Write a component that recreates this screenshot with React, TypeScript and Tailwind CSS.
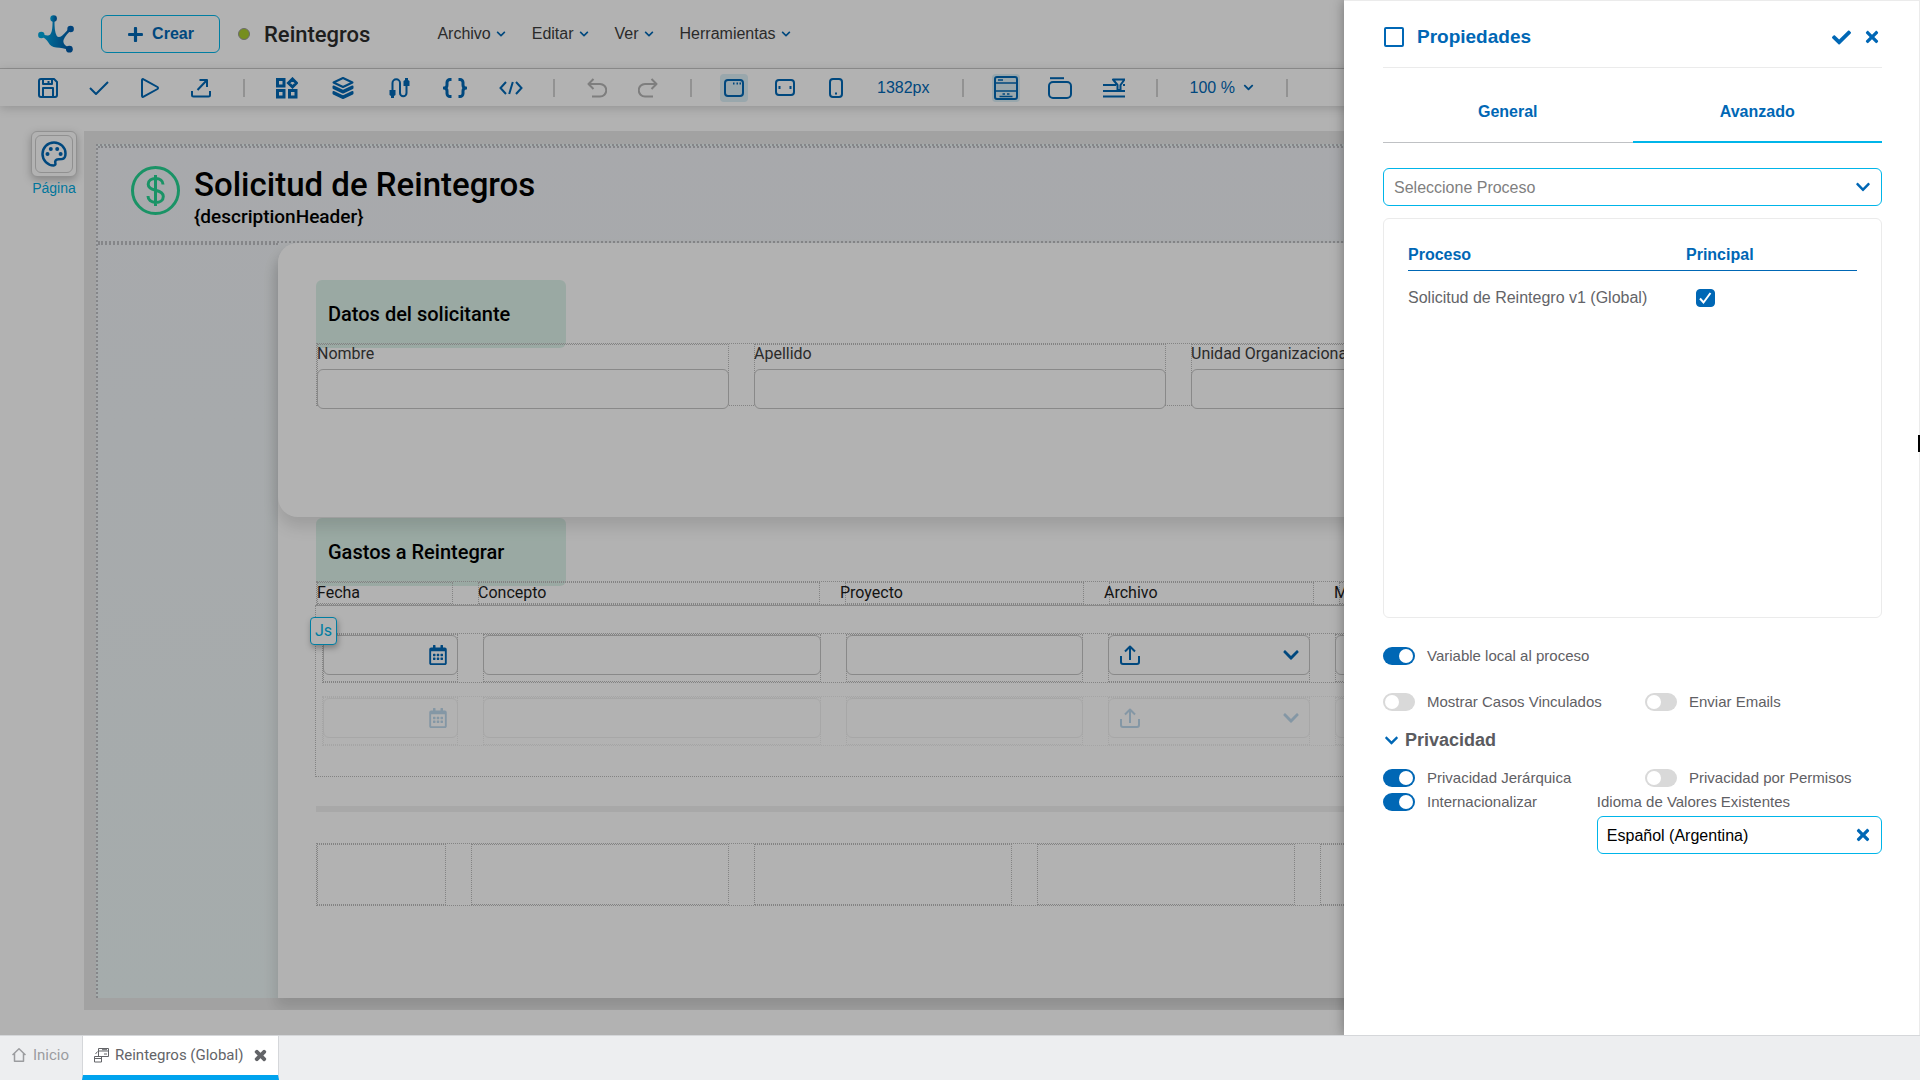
import { useState } from "react";
import type { ReactNode } from "react";
import clsx from "clsx";
import {
    FaCheck,
    FaChevronDown,
    FaPlus,
    FaRegCalendarAlt,
    FaTimes,
} from "react-icons/fa";

const menus = ["Archivo", "Editar", "Ver", "Herramientas"];

const headerCells = [
    { name: "Fecha", width: "w-[136px]", shift: "-ml-px" },
    { name: "Concepto", width: "w-[342px]", shift: "-ml-px" },
    { name: "Proyecto", width: "w-[239px]", shift: "-ml-[6px]" },
    { name: "Archivo", width: "w-[205px]", shift: "-ml-[6px]" },
    { name: "Monto", width: "w-[264px]", shift: "-ml-[6px]" },
];

const personFields = ["Nombre", "Apellido", "Unidad Organizacional"];

const Icon = ({ w, h, sw = 2, children }: { w: number; h: number; sw?: number; children: ReactNode }) => (
    <svg
        width={w}
        height={h}
        viewBox={`0 0 ${w} ${h}`}
        fill="none"
        stroke="currentColor"
        strokeWidth={sw}
        strokeLinejoin="round"
        className="shrink-0"
        aria-hidden="true"
    >
        {children}
    </svg>
);

const Logo = () => (
    <svg width="36" height="38" viewBox="0 0 36 38" aria-hidden="true">
        <defs>
            <linearGradient id="logo" x1="0" y1="0.5" x2="1" y2="0.6">
                <stop offset="0" stopColor="#00aee6" />
                <stop offset="0.6" stopColor="#0078bf" />
                <stop offset="1" stopColor="#0059a5" />
            </linearGradient>
        </defs>
        <g fill="url(#logo)">
            <path d="M14.6 5h1.900c-.1 7 .3 12.500 2.300 16 1 1.600 3.200 1.400 5.200-.2 3-2.400 5.300-5.200 7.300-8.200l2.200 1.600c-3 3.800-6.700 6.800-8 10.800-.8 3.200 1.500 6 6.500 7.800l-1 2.400c-4.400-2.200-8-2.600-12.700-2.800-3.800-.2-6.400-2.200-7.900-5C8.800 24.700 6 22.400 2.600 21l.9-2c3.500 1.400 6.900 2.200 8.700.4C14.500 17 14.500 11 14.600 5z" />
            <circle cx="15.600" cy="3.600" r="3.300" />
        </g>
        <circle cx="3.300" cy="20" r="3.200" fill="#00a8df" />
        <circle cx="32.600" cy="14" r="3.300" fill="#0061b0" />
        <circle cx="31.400" cy="34.200" r="3.400" fill="#005ba8" />
    </svg>
);

const ToolButton = ({ label, active, muted, children }: { label: string; active?: boolean; muted?: boolean; children: ReactNode }) => (
    <button
        aria-label={label}
        className={clsx(
            "flex h-7 w-7 shrink-0 items-center justify-center rounded",
            active && "bg-[#dbeff7]",
            muted ? "text-[#b5b5b5]" : "text-[#0067b5]"
        )}
    >
        {children}
    </button>
);

const Separator = () => <span className="mx-7 h-[18px] w-[2px] shrink-0 bg-[#d2d2d2]" />;

const Header = () => (
    <header className="flex h-[69px] items-center border-b border-[#cfcfcf] bg-white pl-[38px]">
        <Logo />
        <button className="ml-[27px] flex h-[38px] w-[119px] items-center justify-center gap-2 rounded-md border border-[#00b5e9] text-base font-bold text-[#0067b5]">
            <FaPlus size={17} />
            Crear
        </button>
        <span className="ml-[18px] h-3 w-3 rounded-full border border-[#9a9a9a] bg-[#a9cc2c]" />
        <h1 className="ml-[14px] font-['Roboto'] text-[22px] font-medium text-[#2b2b2b]">Reintegros</h1>
        <nav className="ml-[67px] flex gap-[26px]">
            {menus.map((name) => (
                <button key={name} className="flex items-center gap-[5px] text-base text-[#3d3d3d]">
                    {name}
                    <FaChevronDown size={10} className="text-[#0067b5]" />
                </button>
            ))}
        </nav>
    </header>
);

const Toolbar = () => (
    <div className="relative flex h-[37px] items-center bg-white pl-[34px] shadow-[0_2px_10px_rgba(0,0,0,0.18)]">
        <div className="flex gap-[23px]">
            <ToolButton label="Guardar">
                <Icon w={20} h={20}>
                    <path d="M1 3a2 2 0 0 1 2-2h13l3 3v13a2 2 0 0 1-2 2H3a2 2 0 0 1-2-2zM5 19v-9h10v9M5 1v5h9V1M10.500 3v2" />
                </Icon>
            </ToolButton>
            <ToolButton label="Validar">
                <Icon w={20} h={16}>
                    <path d="M1 8l6 6L19 2" />
                </Icon>
            </ToolButton>
            <ToolButton label="Ejecutar">
                <Icon w={18} h={20}>
                    <path d="M1 2.200v15.600c0 1 .8 1.400 1.600.9L16.500 11c.7-.5.7-1.500 0-2L2.600 1.300C1.800.8 1 1.200 1 2.200z" />
                </Icon>
            </ToolButton>
            <ToolButton label="Publicar">
                <Icon w={20} h={20}>
                    <path d="M1 13v4a1.500 1.500 0 0 0 1.500 1.500h15A1.500 1.500 0 0 0 19 17v-4M6.500 12L16 2M8.500 2H16v7" />
                </Icon>
            </ToolButton>
        </div>
        <Separator />
        <div className="flex gap-7">
            <ToolButton label="Componentes">
                <Icon w={22} h={22} sw={3}>
                    <path strokeLinejoin="miter" d="M1.500 2.500h6.500v6.500H1.500zM1.500 13.500h6.500v6.500H1.500zM13.500 13.500h6.500v6.500h-6.500zM16.500 2l4 4-4 4-4-4z" />
                </Icon>
            </ToolButton>
            <ToolButton label="Capas">
                <Icon w={22} h={24} sw={2}>
                    <path d="M11 2l9.500 4.500L11 11 1.500 6.500zM1.500 10.500v1.500L11 16.500l9.500-4.500v-1.500L11 15zM1.500 16v1.500L11 22l9.500-4.500V16L11 20.500z" />
                </Icon>
            </ToolButton>
            <ToolButton label="Conectores">
                <Icon w={21} h={20} sw={2}>
                    <path d="M3.500 13V5a3.500 3.500 0 0 1 7.500 0v10a3.200 3.200 0 0 0 6.500 0V7" />
                    <path fill="currentColor" stroke="none" d="M.5 12h6v5l-1.500 1v2h-3v-2L.5 17zM14.500 8h6V3L19 2V0h-3v2l-1.500 1z" />
                </Icon>
            </ToolButton>
            <ToolButton label="Variables">
                <Icon w={24} h={20} sw={3}>
                    <path d="M8.500 1.500H7a3 3 0 0 0-3 3V7c0 1.500-.8 3-3 3 2.200 0 3 1.500 3 3v2.500a3 3 0 0 0 3 3h1.500M15.500 1.500H17a3 3 0 0 1 3 3V7c0 1.500.8 3 3 3-2.200 0-3 1.500-3 3v2.500a3 3 0 0 1-3 3h-1.500" />
                </Icon>
            </ToolButton>
            <ToolButton label="Código">
                <Icon w={24} h={14} sw={2}>
                    <path strokeLinejoin="miter" d="M7 1L1.500 7 7 13M17 1l5.500 6L17 13M13.800 1l-3.600 12" />
                </Icon>
            </ToolButton>
        </div>
        <Separator />
        <div className="flex gap-[23px]">
            <ToolButton label="Deshacer" muted>
                <Icon w={20} h={20}>
                    <path d="M6.500 1L1.500 6l5 5M2 6h11a6 6 0 0 1 0 12.500H5" />
                </Icon>
            </ToolButton>
            <ToolButton label="Rehacer" muted>
                <Icon w={20} h={20}>
                    <path d="M13.500 1l5 5-5 5M18 6H7a6 6 0 0 0 0 12.500h8" />
                </Icon>
            </ToolButton>
        </div>
        <Separator />
        <div className="flex items-center gap-[23px]">
            <ToolButton label="Escritorio" active>
                <Icon w={20} h={18}>
                    <rect x="1" y="1" width="18" height="16" rx="3" />
                    <path d="M9 4.500h1.500M12.500 4.500H14M15.500 4.500H17" />
                </Icon>
            </ToolButton>
            <ToolButton label="Tableta">
                <Icon w={20} h={17}>
                    <rect x="1" y="1" width="18" height="15" rx="3" />
                    <path d="M4.500 7v3M15.500 7v3" />
                </Icon>
            </ToolButton>
            <ToolButton label="Teléfono">
                <Icon w={14} h={20}>
                    <rect x="1" y="1" width="12" height="18" rx="3" />
                    <path d="M6 15.500h2" />
                </Icon>
            </ToolButton>
            <button className="px-1 text-base text-[#0067b5]">1382px</button>
        </div>
        <Separator />
        <div className="flex gap-[26px]">
            <ToolButton label="Formulario" active>
                <Icon w={24} h={24}>
                    <rect x="1" y="1" width="22" height="22" rx="2" />
                    <path d="M1 7h22M1 15h22M4 4h5M8.500 18h2.500M13 18h2.500M5.500 20.500h13" strokeWidth="1.500" />
                </Icon>
            </ToolButton>
            <ToolButton label="Contenedor">
                <Icon w={24} h={22}>
                    <rect x="1" y="5" width="22" height="16" rx="4" />
                    <path d="M2 1.200h14" />
                </Icon>
            </ToolButton>
            <ToolButton label="Estilos">
                <Icon w={22} h={20}>
                    <path d="M0 7h13M0 13h22M0 18.500h22M10 1.500h11.500L17.500 7v5h-3V7zM20 7h2" />
                </Icon>
            </ToolButton>
        </div>
        <Separator />
        <button className="flex shrink-0 items-center gap-2 px-1 text-base text-[#0067b5]">
            100 %
            <FaChevronDown size={11} />
        </button>
        <Separator />
    </div>
);

const SectionTitle = ({ children }: { children: ReactNode }) => (
    <h3 className="-mb-[5px] flex h-[68px] w-[250px] items-center rounded-md bg-[#ddf3ea] pl-3 text-xl font-medium text-black">
        {children}
    </h3>
);

const ExpenseRow = ({ faded }: { faded?: boolean }) => {
    const box = "flex h-10 items-center rounded-md border border-[#c5c5c5]";
    const cell = "shrink-0 border border-dotted border-[#bcbcbc]";
    return (
        <div className={clsx("flex h-[50px] gap-[25px] border border-dotted border-[#bcbcbc]", faded && "opacity-25")}>
            <div className={clsx(cell, "w-[135px]")}>
                <div className={clsx(box, "-mx-px justify-end pr-[9px] text-[#0067b5]")}>
                    <FaRegCalendarAlt size={20} />
                </div>
            </div>
            <div className={clsx(cell, "w-[338px]")}>
                <div className={clsx(box, "-mx-px")} />
            </div>
            <div className={clsx(cell, "w-[237px]")}>
                <div className={clsx(box, "-mx-px")} />
            </div>
            <div className={clsx(cell, "w-[202px]")}>
                <div className={clsx(box, "-mx-px justify-between pr-[9px] pl-[11px] text-[#0067b5]")}>
                    <Icon w={20} h={20}>
                        <path d="M1 11v6a2 2 0 0 0 2 2h14a2 2 0 0 0 2-2v-6M10 15V1.500M5 6.500l5-5 5 5" />
                    </Icon>
                    <FaChevronDown size={18} />
                </div>
            </div>
            <div className={clsx(cell, "w-[262px]")}>
                <div className={clsx(box, "-mx-px")} />
            </div>
        </div>
    );
};

const Canvas = () => (
    <div className="min-w-0 flex-1 overflow-hidden bg-[#e9e9e9] pt-[13px] pb-3 pl-3 font-['Roboto']">
        <div className="flex h-full w-[1558px] flex-col border-t-2 border-l-2 border-dotted border-[#bfc1c4] bg-linear-to-b from-[#f1f3f6] to-[#edf6f6]">
            <div className="flex gap-[14px] border-y-2 border-dotted border-[#bfc1c4] pt-[18px] pb-[11px] pl-[33px]">
                <svg width="49" height="49" viewBox="0 0 49 49" fill="none" stroke="#26d392" strokeWidth="3" aria-hidden="true">
                    <circle cx="24.500" cy="24.500" r="23" />
                    <path d="M24.500 9v31M32 18.500c0-3.500-3-6-7.300-6s-7.500 2.200-7.500 5.700c0 3.700 3.300 5 7.500 6 4.300 1.100 7.600 2.600 7.600 6.200 0 3.700-3.200 6-7.600 6-4.600 0-7.700-2.500-7.700-6.300" />
                </svg>
                <div className="text-black">
                    <h2 className="text-[33px] leading-[38px] font-medium">Solicitud de Reintegros</h2>
                    <p className="text-[19px] leading-[26px] font-medium">{"{descriptionHeader}"}</p>
                </div>
            </div>
            <div className="flex min-h-0 flex-1">
                <div className="w-[180px] shrink-0 border-t-2 border-dotted border-[#bfc1c4]" />
                <div className="flex flex-1 flex-col rounded-tl-[20px] bg-white shadow-[-2px_10px_14px_rgba(0,0,0,0.12)]">
                    <section className="relative h-[274px] shrink-0 rounded-[20px] bg-white px-[38px] pt-[37px] shadow-[0_10px_16px_rgba(0,0,0,0.12)]">
                        <SectionTitle>Datos del solicitante</SectionTitle>
                        <div className="relative flex h-[63px] w-[1288px] gap-[25px] border border-dotted border-[#bcbcbc]">
                            {personFields.map((name) => (
                                <div key={name} className="w-[412px] border border-dotted border-[#bcbcbc]">
                                    <label htmlFor={name} className="-ml-px block h-6 text-base leading-[18px] text-[#3d3d3d]">
                                        {name}
                                    </label>
                                    <input id={name} className="-mx-px block h-10 w-[412px] rounded-md border border-[#c5c5c5] bg-white" />
                                </div>
                            ))}
                        </div>
                    </section>
                    <section className="px-[38px] pt-px">
                        <SectionTitle>Gastos a Reintegrar</SectionTitle>
                        <div className="relative flex h-6 w-[1288px] gap-[25px] border border-dotted border-[#bcbcbc]">
                            {headerCells.map(({ name, width, shift }) => (
                                <div key={name} className={clsx("shrink-0 border border-dotted border-[#bcbcbc] text-base leading-5 text-[#1c1c1c]", width)}>
                                    <span className={shift}>{name}</span>
                                </div>
                            ))}
                        </div>
                        <div className="relative -ml-px flex h-[172px] w-[1290px] flex-col gap-[13px] border border-dotted border-[#bcbcbc] border-t-[#c5c5c5] pt-[27px] pl-[6px] [border-top-style:solid]">
                            <ExpenseRow />
                            <ExpenseRow faded />
                            <span className="absolute top-[11px] -left-[6px] flex h-7 w-[27px] items-center justify-center rounded-sm border border-[#00b5e9] bg-white text-base text-[#00b5e9] shadow-[1px_3px_6px_rgba(0,0,0,0.3)]">
                                Js
                            </span>
                        </div>
                        <hr className="mt-[29px] h-[6px] border-0 bg-[#f1f1f1]" />
                        <div className="mt-[31px] flex h-[63px] w-[1288px] gap-[25px] border border-dotted border-[#bcbcbc]">
                            <div className="w-[129px] shrink-0 border border-dotted border-[#bcbcbc]" />
                            {[1, 2, 3, 4].map((n) => (
                                <div key={n} className="w-[258px] shrink-0 border border-dotted border-[#bcbcbc]" />
                            ))}
                        </div>
                    </section>
                </div>
            </div>
        </div>
    </div>
);

const Workspace = () => (
    <div className="flex min-h-0 flex-1 bg-white pt-[25px] pb-[25px] pl-[31px]">
        <button className="mr-[7px] flex w-[46px] flex-col items-center gap-[3px] self-start text-sm leading-4 text-[#00a9e0]">
            <span className="flex h-[46px] w-[46px] items-center justify-center rounded-md border border-[#d0d0d0] bg-white shadow-[0_3px_8px_rgba(0,0,0,0.25)]">
                <span className="flex h-[38px] w-[38px] items-center justify-center rounded-md border border-[#cfcfcf] text-[#0067b5]">
                    <Icon w={26} h={26} sw={2.5}>
                        <path d="M13 1.500C6.500 1.500 1.500 6.600 1.500 13c0 6.300 5.200 11.300 11.200 11.500 1.300 0 2-1 1.700-2.200-.7-2.300.3-4 3-4.100l3.500-.1c2.200-.2 3.600-2.500 3.600-5.600C24.500 6.400 19.300 1.500 13 1.500z" />
                        <g fill="currentColor" stroke="none">
                            <circle cx="9.800" cy="8" r="2" />
                            <circle cx="16.200" cy="8" r="2" />
                            <circle cx="6.500" cy="13" r="2" />
                            <circle cx="19.600" cy="13" r="2" />
                        </g>
                    </Icon>
                </span>
            </span>
            Página
        </button>
        <Canvas />
    </div>
);

const Toggle = ({ label, defaultOn }: { label: string; defaultOn?: boolean }) => (
    <label className="flex h-[18px] items-center gap-3 text-[15px] whitespace-nowrap text-[#5f6064]">
        <input
            type="checkbox"
            role="switch"
            defaultChecked={defaultOn}
            className="h-[18px] w-8 appearance-none rounded-full bg-[#d9d9d9] p-[2px] before:block before:h-[14px] before:w-[14px] before:rounded-full before:bg-white checked:bg-[#0067b5] checked:before:ml-auto"
        />
        {label}
    </label>
);

const Properties = () => {
    const [tab, setTab] = useState("Avanzado");

    return (
        <aside className="absolute inset-y-0 right-0 w-[30%] border-t border-r border-[#ebebeb] bg-white pr-[37px] pl-[39px] shadow-[0_0_12px_rgba(0,0,0,0.35)]">
            <div className="flex h-[67px] items-center border-b border-[#ebebeb] pt-[6px] text-[#0067b5]">
                <span className="mr-[13px] ml-px h-5 w-5 rounded-xs border-2 border-[#0067b5]" />
                <h2 className="flex-1 text-[19px] font-bold">Propiedades</h2>
                <button aria-label="Aceptar" className="mr-3">
                    <FaCheck size={19} />
                </button>
                <button aria-label="Cerrar" className="mr-px">
                    <FaTimes size={18} />
                </button>
            </div>

            {/* Tabs */}
            <div className="mt-[11px] grid grid-cols-2">
                {["General", "Avanzado"].map((name) => (
                    <button
                        key={name}
                        onClick={() => setTab(name)}
                        className={clsx(
                            "relative h-16 border-b border-[#bfc1c4] pt-[2px] text-base font-bold text-[#0067b5]",
                            tab === name && "after:absolute after:inset-x-0 after:-bottom-px after:h-[2px] after:bg-[#00b5e9]"
                        )}
                    >
                        {name}
                    </button>
                ))}
            </div>

            <div className="relative mt-[25px]">
                <select
                    aria-label="Seleccione Proceso"
                    className="h-[38px] w-full appearance-none rounded-md border border-[#00b5e9] bg-white pt-px pl-[10px] text-base text-[#7f7f7f]"
                >
                    <option>Seleccione Proceso</option>
                </select>
                <FaChevronDown size={16} className="pointer-events-none absolute top-[11px] right-[11px] text-[#0067b5]" />
            </div>

            <div className="mt-3 h-[400px] rounded-md border border-[#ebebeb] px-6 pt-[21px]">
                <table className="w-full text-left text-base">
                    <thead>
                        <tr className="h-[30px] border-b border-[#0067b5] text-[#0067b5]">
                            <th className="w-[278px] font-bold">Proceso</th>
                            <th className="font-bold">Principal</th>
                        </tr>
                    </thead>
                    <tbody>
                        <tr className="h-[56px] text-[#636468]">
                            <td>Solicitud de Reintegro v1 (Global)</td>
                            <td className="pl-[10px]">
                                <span className="relative block h-[18px] w-[19px]">
                                    <input
                                        type="checkbox"
                                        defaultChecked
                                        aria-label="Principal"
                                        className="peer block h-[18px] w-[19px] appearance-none rounded-sm border border-[#0067b5] checked:bg-[#0067b5]"
                                    />
                                    <svg viewBox="0 0 19 18" className="pointer-events-none absolute inset-0 hidden peer-checked:block" aria-hidden="true">
                                        <path d="M4 9.500l3.500 4L14.500 4" fill="none" stroke="#fff" strokeWidth="2" />
                                    </svg>
                                </span>
                            </td>
                        </tr>
                    </tbody>
                </table>
            </div>

            <div className="mt-[29px]">
                <Toggle label="Variable local al proceso" defaultOn />
            </div>
            <div className="mt-7 grid grid-cols-[21fr_19fr]">
                <Toggle label="Mostrar Casos Vinculados" />
                <Toggle label="Enviar Emails" />
            </div>

            <button className="mt-[19px] flex h-5 items-center gap-[6px] pl-px text-lg font-bold text-[#5a5b60]">
                <FaChevronDown size={15} className="text-[#0067b5]" />
                Privacidad
            </button>
            <div className="mt-[19px] grid grid-cols-[21fr_19fr]">
                <Toggle label="Privacidad Jerárquica" defaultOn />
                <Toggle label="Privacidad por Permisos" />
            </div>
            <div className="mt-[6px] grid grid-cols-[3fr_4fr]">
                <Toggle label="Internacionalizar" defaultOn />
                <div>
                    <label htmlFor="idioma" className="block h-[18px] text-[15px] leading-[18px] text-[#5f6064]">
                        Idioma de Valores Existentes
                    </label>
                    <div className="relative mt-[5px]">
                        <input
                            id="idioma"
                            defaultValue="Español (Argentina)"
                            className="h-[38px] w-full rounded-md border border-[#00b5e9] bg-white pt-px pl-[9px] text-base text-black"
                        />
                        <button aria-label="Limpiar" className="absolute top-[10px] right-[10px] text-[#0067b5]">
                            <FaTimes size={18} />
                        </button>
                    </div>
                </div>
            </div>

            {/* Resize handle */}
            <span className="absolute top-[42%] -right-px h-[17px] w-[2px] bg-black" />
        </aside>
    );
};

const Footer = () => (
    <footer className="flex h-[45px] shrink-0 border-t border-[#d5d7da] bg-[#edeef0] font-['Roboto'] text-[15px]">
        <button className="flex w-[82px] items-center gap-[7px] pb-[6px] pl-3 text-[#9b9c9f]">
            <Icon w={14} h={14} sw={1.5}>
                <path d="M.5 7L7 .8 13.500 7M2.500 5.500v7.700h9V5.500" />
            </Icon>
            Inicio
        </button>
        <div className="flex w-[197px] items-center border-x border-b-[5px] border-x-[#d5d7da] border-b-[#00a3ee] bg-white pb-px pl-[11px] text-[#636468]">
            <Icon w={15} h={15} sw={1}>
                <path d="M4.500.5h10v8h-10zM4.500 3h10M8 1.700h5M10 6h3M.5 8.500h7v5.500h-7zM.5 10.500h7M1.500 6l2-2.500" />
            </Icon>
            <button className="ml-[6px]">Reintegros (Global)</button>
            <button aria-label="Cerrar pestaña" className="ml-[10px]">
                <FaTimes size={15} stroke="currentColor" strokeWidth={40} />
            </button>
        </div>
    </footer>
);

const App = () => {
    return (
        <div className="flex h-screen flex-col overflow-hidden bg-white font-['Liberation_Sans',sans-serif]">
            <div className="relative flex min-h-0 flex-1 flex-col overflow-hidden">
                <Header />
                <Toolbar />
                <Workspace />
                <div className="absolute inset-0 bg-black/30" />
                <Properties />
            </div>
            <Footer />
        </div>
    );
};

export default App;
